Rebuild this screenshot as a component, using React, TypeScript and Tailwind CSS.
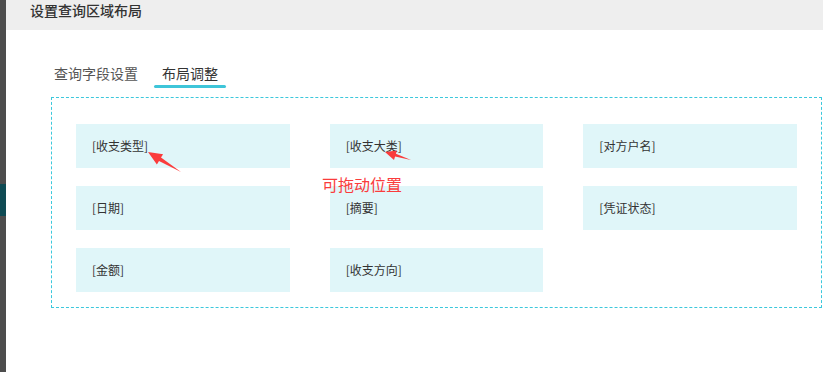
const FIELDS = [
  '[收支类型]',
  '[收支大类]',
  '[对方户名]',
  '[日期]',
  '[摘要]',
  '[凭证状态]',
  '[金额]',
  '[收支方向]',
];

function Arrows() {
  return (
    <svg className="pointer-events-none absolute left-0 top-0" width="823" height="372">
      <polygon
        points="148,152 163.1,154.2 161,157.6 181,172 159,161 156.9,164.4"
        fill="#fa3c3c"
      />
      <polygon
        points="385,152 397,150.4 395.9,153.8 411,160 395.1,156.6 394,160"
        fill="#fa3c3c"
      />
    </svg>
  );
}

export default function App() {
  return (
    <div
      className="relative flex h-[372px] w-[823px] overflow-hidden bg-white text-[#333]"
      style={{ fontFamily: '"Noto Sans CJK SC", "Noto Sans", sans-serif' }}
    >
      {/* backdrop edge */}
      <div className="flex w-[6px] flex-col bg-[#4d4d4d]">
        <div className="mt-[184px] h-[32px] bg-[#0f4b54]" />
      </div>

      <div className="flex flex-1 flex-col">
        <div className="h-[30px] bg-[#eeeeee] px-[24px] text-[14px] font-medium leading-[20px] text-[#333]">
          设置查询区域布局
        </div>

        {/* Tabs */}
        <div className="ml-[40px] mt-[33px] flex gap-2 text-[14px] leading-[20px]">
          <div className="flex flex-col px-2">
            <span className="text-[#555]">查询字段设置</span>
            <div className="mt-[2px] h-[3px]" />
          </div>
          <div className="flex flex-col px-2">
            <span className="text-[#333]">布局调整</span>
            <div className="-mx-2 mt-[2px] h-[3px] rounded-full bg-[#3ec5d9]" />
          </div>
        </div>

        {/* Layout box */}
        <div className="ml-[45px] mr-[1px] mt-[9px] grid grid-cols-3 gap-x-10 gap-y-[18px] border-[1px] border-dashed border-[#3cc8dc] px-[24px] pb-[15px] pt-[26px] text-[#3cc8dc]">
          {FIELDS.map((f) => (
            <div
              key={f}
              className="flex h-[44px] items-center bg-[#e0f6f9] pl-4 text-[12px] text-[#333]"
            >
              {f}
            </div>
          ))}
        </div>
      </div>

      <div className="absolute left-[322px] top-[174px] text-[16px] leading-[20px] text-[#fa3c3c]">
        可拖动位置
      </div>
      <Arrows />
    </div>
  );
}
